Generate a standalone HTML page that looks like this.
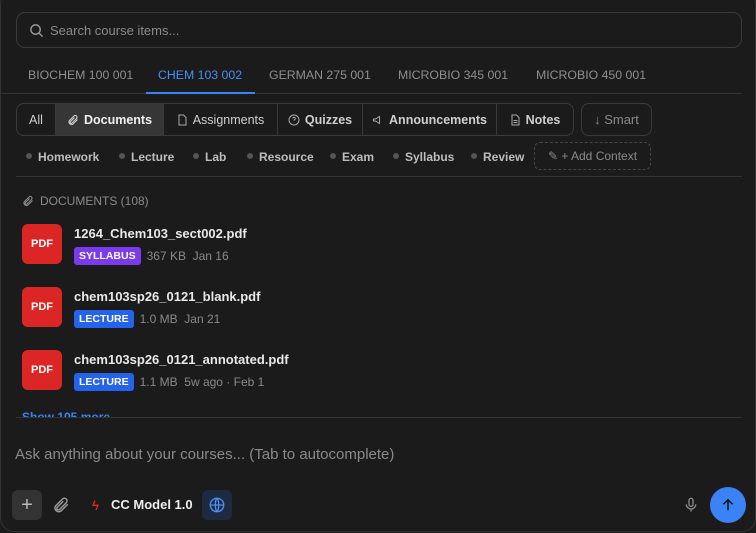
<!DOCTYPE html><html><head><style>
*{box-sizing:border-box;margin:0;padding:0}
body{width:756px;height:533px;background:#1b1b1b;font-family:"Liberation Sans",sans-serif;color:#e5e5e5;overflow:hidden;position:relative}
.frame{position:absolute;left:0;top:-10px;width:756px;height:542px;border:1px solid #333;border-radius:14px}
.abs{position:absolute}
.search{left:16px;top:12px;width:726px;height:36px;border:1px solid #3a3a3a;border-radius:9px}
.search span{position:absolute;left:33px;top:10px;font-size:13px;color:#8a8a8a}
.tabs{top:68px;left:0;font-size:12.3px;color:#8f8f8f}
.tabs span{position:absolute;white-space:nowrap}
.grp{left:16px;top:103px;height:33px;border:1px solid #3a3a3a;border-radius:8px;display:flex;overflow:hidden}
.grp div{height:31px;display:flex;align-items:center;justify-content:center;font-size:12.5px;color:#cfcfcf;border-right:1px solid #3a3a3a;font-weight:bold;gap:5px;white-space:nowrap}
.grp div:last-child{border-right:none}
.grp svg{flex:none}
.chips{top:150px;font-size:12px;color:#bdbdbd;font-weight:bold}
.chips span{position:absolute;white-space:nowrap}
.chips span:before{content:"";display:inline-block;width:6px;height:6px;border-radius:50%;background:#555;margin-right:6px;vertical-align:2px}
.pdf{left:22px;width:40px;height:40px;background:#dc2626;border-radius:6px;color:#fff;font-size:11px;font-weight:bold;display:flex;align-items:center;justify-content:center}
.name{left:74px;font-size:13px;font-weight:bold;color:#e8e8e8}
.meta{left:74px;font-size:12px;color:#8a8a8a;display:flex;align-items:center;gap:6px}
.tag{color:#fff;font-size:10.5px;font-weight:bold;padding:3px 5px;border-radius:3px}
</style></head><body>
<div class="frame"></div>
<div class="abs search"><svg class="abs" style="left:12px;top:10px" width="15" height="15" viewBox="0 0 16 16" fill="none" stroke="#999" stroke-width="1.5"><circle cx="7" cy="7" r="5"/><path d="M11 11l3.5 3.5"/></svg><span>Search course items...</span></div>
<div class="abs tabs" style="width:756px"><span style="left:28px">BIOCHEM 100 001</span><span style="left:158px;color:#4a8ff5">CHEM 103 002</span><span style="left:269px">GERMAN 275 001</span><span style="left:398px">MICROBIO 345 001</span><span style="left:536px">MICROBIO 450 001</span></div>
<div class="abs" style="left:0;top:93px;width:742px;height:1px;background:#333"></div>
<div class="abs" style="left:146px;top:92px;width:109px;height:2px;background:#3b82f6"></div>
<div class="abs grp">
<div style="width:39px;font-weight:normal">All</div>
<div style="width:108px;background:#363636;color:#f0f0f0"><svg width="12" height="12" viewBox="0 0 24 24" fill="none" stroke="#ccc" stroke-width="2.2"><path d="M21 11l-9 9a5 5 0 01-7-7l9-9a3.5 3.5 0 015 5l-9 9a2 2 0 01-3-3l8-8"/></svg>Documents</div>
<div style="width:114px;font-weight:normal"><svg width="11" height="12" viewBox="0 0 20 24" fill="none" stroke="#aaa" stroke-width="2"><path d="M3 2h9l5 5v15H3z"/></svg>Assignments</div>
<div style="width:85px"><svg width="12" height="12" viewBox="0 0 24 24" fill="none" stroke="#aaa" stroke-width="2"><circle cx="12" cy="12" r="10"/><path d="M9.5 9a2.5 2.5 0 114 2c-1 .7-1.5 1.2-1.5 2.5M12 17v.5"/></svg>Quizzes</div>
<div style="width:134px"><svg width="12" height="12" viewBox="0 0 24 24" fill="none" stroke="#aaa" stroke-width="2"><path d="M3 10v4h4l8 5V5L7 10z"/></svg>Announcements</div>
<div style="width:76px"><svg width="11" height="12" viewBox="0 0 20 24" fill="none" stroke="#aaa" stroke-width="2"><path d="M3 2h9l5 5v15H3zM6 13h8M6 17h8"/></svg>Notes</div>
</div>
<div class="abs" style="left:581px;top:103px;width:71px;height:33px;border:1px solid #3a3a3a;border-radius:8px;font-size:13px;color:#8a8a8a;display:flex;align-items:center;justify-content:center">↓ Smart</div>
<div class="abs chips" style="width:756px"><span style="left:26px">Homework</span><span style="left:119px">Lecture</span><span style="left:193px">Lab</span><span style="left:247px">Resource</span><span style="left:330px">Exam</span><span style="left:393px">Syllabus</span><span style="left:471px">Review</span></div>
<div class="abs" style="left:534px;top:142px;width:117px;height:28px;border:1px dashed #444;border-radius:6px;font-size:12px;color:#8a8a8a;display:flex;align-items:center;justify-content:center">✎ + Add Context</div>
<div class="abs" style="left:16px;top:176px;width:726px;height:1px;background:#333"></div>
<div class="abs" style="left:22px;top:194px;font-size:12px;color:#8a8a8a;display:flex;align-items:center;gap:6px"><svg width="12" height="12" viewBox="0 0 24 24" fill="none" stroke="#888" stroke-width="2.2"><path d="M21 11l-9 9a5 5 0 01-7-7l9-9a3.5 3.5 0 015 5l-9 9a2 2 0 01-3-3l8-8"/></svg>DOCUMENTS (108)</div>
<div class="abs pdf" style="top:224px">PDF</div>
<div class="abs name" style="top:226px">1264_Chem103_sect002.pdf</div>
<div class="abs meta" style="top:247px"><span class="tag" style="background:#7c3aed">SYLLABUS</span>367 KB&nbsp; Jan 16</div>
<div class="abs pdf" style="top:287px">PDF</div>
<div class="abs name" style="top:289px">chem103sp26_0121_blank.pdf</div>
<div class="abs meta" style="top:310px"><span class="tag" style="background:#2563eb">LECTURE</span>1.0 MB&nbsp; Jan 21</div>
<div class="abs pdf" style="top:350px">PDF</div>
<div class="abs name" style="top:352px">chem103sp26_0121_annotated.pdf</div>
<div class="abs meta" style="top:373px"><span class="tag" style="background:#2563eb">LECTURE</span>1.1 MB&nbsp; 5w ago · Feb 1</div>
<div class="abs" style="left:0;top:405px;width:756px;height:13px;overflow:hidden"><div style="position:absolute;left:22px;top:5px;font-size:12px;color:#3b82f6;font-weight:bold">Show 105 more</div></div>
<div class="abs" style="left:16px;top:417px;width:726px;height:1px;background:#333"></div>
<div class="abs" style="left:15px;top:446px;font-size:15px;color:#8a8a8a">Ask anything about your courses... (Tab to autocomplete)</div>
<div class="abs" style="left:12px;top:490px;width:30px;height:30px;background:#333;border-radius:6px;color:#bbb;font-size:20px;display:flex;align-items:center;justify-content:center">+</div>
<svg class="abs" style="left:52px;top:496px" width="18" height="18" viewBox="0 0 24 24" fill="none" stroke="#999" stroke-width="2"><path d="M21 11l-9 9a5 5 0 01-7-7l9-9a3.5 3.5 0 015 5l-9 9a2 2 0 01-3-3l8-8"/></svg>
<div class="abs" style="left:92px;top:498px;font-size:13px;color:#dc2626;font-weight:bold">ϟ</div>
<div class="abs" style="left:111px;top:497px;font-size:13px;font-weight:bold;color:#eee">CC Model 1.0</div>
<div class="abs" style="left:202px;top:490px;width:30px;height:30px;background:#1e2a40;border-radius:6px"><svg style="position:absolute;left:6px;top:6px" width="18" height="18" viewBox="0 0 24 24" fill="none" stroke="#4a8ff5" stroke-width="1.8"><circle cx="12" cy="12" r="9"/><path d="M3 12h18M12 3c3 3 3 15 0 18M12 3c-3 3-3 15 0 18"/></svg></div>
<svg class="abs" style="left:683px;top:496px" width="16" height="18" viewBox="0 0 24 24" fill="none" stroke="#888" stroke-width="2"><rect x="9" y="2" width="6" height="12" rx="3"/><path d="M5 11a7 7 0 0014 0M12 18v4"/></svg>
<div class="abs" style="left:710px;top:487px;width:36px;height:36px;background:#3b82f6;border-radius:50%"><svg style="position:absolute;left:9px;top:9px" width="18" height="18" viewBox="0 0 24 24" fill="none" stroke="#111" stroke-width="2"><path d="M12 19V5M6 11l6-6 6 6"/></svg></div>
</body></html>
